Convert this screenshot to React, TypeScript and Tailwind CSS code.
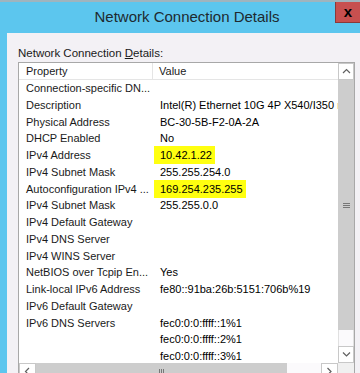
const rows: { p: string; v?: string; hl?: boolean }[] = [
  { p: "Connection-specific DN..." },
  { p: "Description", v: "Intel(R) Ethernet 10G 4P X540/I350 rNDC" },
  { p: "Physical Address", v: "BC-30-5B-F2-0A-2A" },
  { p: "DHCP Enabled", v: "No" },
  { p: "IPv4 Address", v: "10.42.1.22", hl: true },
  { p: "IPv4 Subnet Mask", v: "255.255.254.0" },
  { p: "Autoconfiguration IPv4 ...", v: "169.254.235.255", hl: true },
  { p: "IPv4 Subnet Mask", v: "255.255.0.0" },
  { p: "IPv4 Default Gateway" },
  { p: "IPv4 DNS Server" },
  { p: "IPv4 WINS Server" },
  { p: "NetBIOS over Tcpip En...", v: "Yes" },
  { p: "Link-local IPv6 Address", v: "fe80::91ba:26b:5151:706b%19" },
  { p: "IPv6 Default Gateway" },
  { p: "IPv6 DNS Servers", v: "fec0:0:0:ffff::1%1" },
  { p: "", v: "fec0:0:0:ffff::2%1" },
  { p: "", v: "fec0:0:0:ffff::3%1" },
];

function Chevron({ dir }: { dir: "up" | "down" | "left" | "right" }) {
  const d = {
    up: "M1 5 L4.5 1.5 L8 5",
    down: "M1 1.5 L4.5 5 L8 1.5",
    left: "M5 1 L1.5 4.5 L5 8",
    right: "M1.5 1 L5 4.5 L1.5 8",
  }[dir];
  const horiz = dir === "up" || dir === "down";
  return (
    <svg width={horiz ? 9 : 7} height={horiz ? 7 : 9} viewBox={horiz ? "0 0 9 7" : "0 0 7 9"}>
      <path d={d} fill="none" stroke="#606060" strokeWidth="1.2" />
    </svg>
  );
}

export default function App() {
  return (
    <div
      className="w-[360px] h-[373px] overflow-hidden bg-[#5cc6ee] flex flex-col text-[11px] text-[#1a1a1a]"
      style={{ fontFamily: '"Liberation Sans", Arial, sans-serif' }}
    >
      <div className="h-[2px] bg-[#9fb4be] shrink-0" />
      <div className="relative h-[31px] shrink-0 flex items-center justify-center">
        <span className="text-[15px] text-[#1e2a30] pl-[14px]">Network Connection Details</span>
        <div className="absolute top-0 right-0 w-[25px] h-[21px] bg-[#c7504f] border-l border-b border-[#8a3a3a] flex items-center justify-center">
          <span className="font-bold text-[15px] leading-none text-black -mt-[2px]">x</span>
        </div>
      </div>
      <div className="h-[340px] shrink-0 ml-[7px] bg-[#f3f1f5] flex flex-col">
        <div className="h-[29px] pl-[11px] pt-[13px] leading-[14px] text-[11.5px] shrink-0">
          Network Connection <span className="underline">D</span>etails:
        </div>
        <div className="ml-[11px] w-[337px] h-[311px] shrink-0 border-t border-l border-r border-[#a8a8a8] bg-white flex flex-col">
          <div className="flex h-[300px] shrink-0">
            <div className="w-[319px] flex flex-col overflow-hidden">
              <div className="h-[17px] flex border-b border-[#e5e5e5] shrink-0">
                <div className="w-[134px] pl-[7px] leading-[17px] border-r border-[#e5e5e5]">Property</div>
                <div className="pl-[6px] leading-[17px]">Value</div>
              </div>
              {rows.map((r, i) => (
                <div key={i} className="h-[16.75px] flex shrink-0 whitespace-nowrap">
                  <div className="w-[135px] pl-[7px] leading-[16.75px] shrink-0 overflow-hidden">{r.p}</div>
                  <div className="leading-[16.75px] text-black">
                    {r.v &&
                      (r.hl ? (
                        <span className="bg-[#ffff10] pl-[6px] pr-[3px] py-[3px]">{r.v}</span>
                      ) : (
                        <span className="pl-[6px]">{r.v}</span>
                      ))}
                  </div>
                </div>
              ))}
            </div>
            <div className="w-[16px] shrink-0 flex flex-col bg-[#f0f0f0]">
              <div className="h-[17px] shrink-0 border border-[#c8c8c8] bg-white flex items-center justify-center">
                <Chevron dir="up" />
              </div>
              <div className="h-[250px] shrink-0 bg-[#cdcdcd] flex items-center justify-center">
                <div className="flex flex-col gap-[1px]">
                  <div className="w-[7px] h-[1px] bg-[#777]" />
                  <div className="w-[7px] h-[1px] bg-[#777]" />
                  <div className="w-[7px] h-[1px] bg-[#777]" />
                </div>
              </div>
              <div className="flex-1 bg-[#fbfafc] border-x border-[#e0e0e0]" />
              <div className="h-[17px] shrink-0 border border-[#c8c8c8] bg-white flex items-center justify-center">
                <Chevron dir="down" />
              </div>
            </div>
          </div>
          <div className="flex h-[10px] shrink-0 overflow-hidden items-start">
            <div className="w-[17px] h-[17px] shrink-0 border border-[#c8c8c8] bg-white flex items-center justify-center">
              <Chevron dir="left" />
            </div>
            <div className="w-[251px] h-[17px] shrink-0 bg-[#cdcdcd] flex justify-center items-center gap-[1px]">
              <div className="w-[1px] h-[6px] bg-[#777]" />
              <div className="w-[1px] h-[6px] bg-[#777]" />
              <div className="w-[1px] h-[6px] bg-[#777]" />
            </div>
            <div className="flex-1 h-[17px] bg-[#fbfafc]" />
            <div className="w-[17px] h-[17px] shrink-0 border border-[#c8c8c8] bg-white flex items-center justify-center">
              <Chevron dir="right" />
            </div>
            <div className="w-[16px] h-[17px] shrink-0 bg-[#f0f0f0]" />
          </div>
        </div>
      </div>
    </div>
  );
}
